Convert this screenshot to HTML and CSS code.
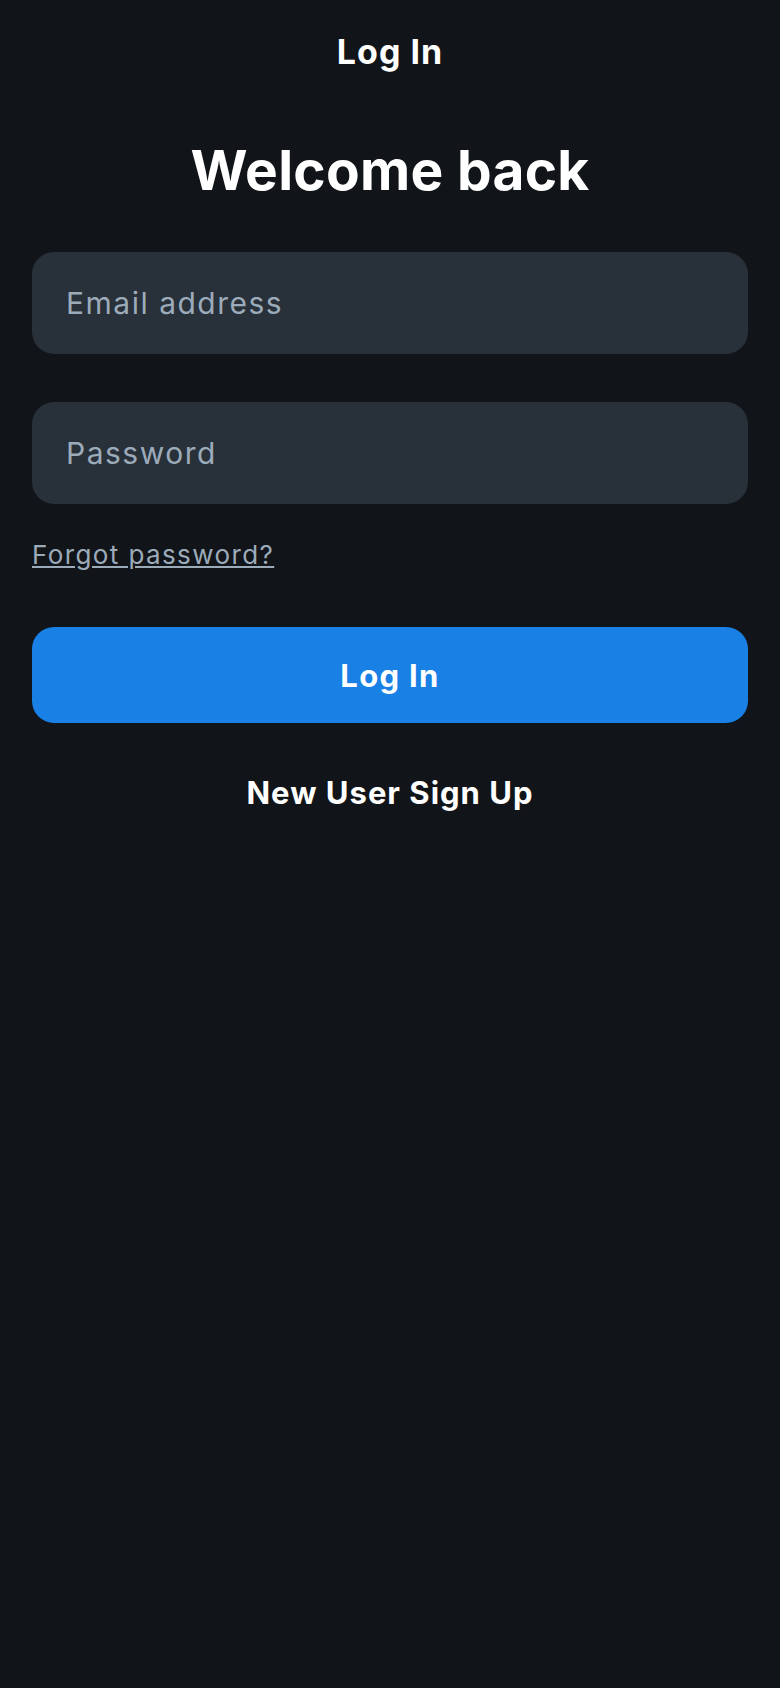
FILE: index.html
```html
<!DOCTYPE html>
<html lang="en">
<head>
<meta charset="utf-8">
<title>Log In</title>
<link rel="stylesheet" href="styles.css">
</head>
<body>
<div class="screen">
  <header class="topbar"><span class="topbar-title">Log In</span></header>
  <h1 class="welcome">Welcome back</h1>
  <form class="form">
    <input class="field" type="email" placeholder="Email address">
    <input class="field" type="password" placeholder="Password">
    <a class="forgot" href="#">Forgot password?</a>
    <button class="primary" type="button">Log In</button>
    <a class="signup" href="#">New User Sign Up</a>
  </form>
</div>
</body>
</html>
```

FILE: styles.css
```css
* { box-sizing: border-box; }
html, body {
  margin: 0;
  padding: 0;
  background: #111418;
}
body {
  font-family: Inter, "Noto Sans", "Liberation Sans", sans-serif;
  color: #ffffff;
}
.screen {
  min-height: 1688px;
  display: flex;
  flex-direction: column;
  padding: 0 32px;
}
.topbar {
  height: 104px;
  display: flex;
  align-items: center;
  justify-content: center;
}
.topbar-title {
  font-size: 34px;
  font-weight: 700;
  line-height: 40px;
  letter-spacing: 1px;
}
.welcome {
  margin: 34px 0 0;
  font-size: 55px;
  font-weight: 700;
  line-height: 64px;
  text-align: center;
  letter-spacing: 0.3px;
}
.form {
  display: flex;
  flex-direction: column;
  margin-top: 50px;
}
.field {
  height: 102px;
  border: none;
  outline: none;
  border-radius: 22px;
  background: #283039;
  color: #ffffff;
  font-family: inherit;
  font-size: 30px;
  letter-spacing: 1.5px;
  padding: 0 34px;
  margin-bottom: 48px;
}
.field::placeholder { color: #9cabba; }
.forgot {
  margin-top: -13px;
  font-size: 26px;
  line-height: 32px;
  letter-spacing: 1.4px;
  color: #9cabba;
  text-decoration: underline;
  align-self: flex-start;
}
.primary {
  margin-top: 56px;
  height: 96px;
  border: none;
  border-radius: 22px;
  background: #1980e6;
  color: #ffffff;
  font-family: inherit;
  font-size: 31px;
  font-weight: 700;
  letter-spacing: 1.3px;
}
.signup {
  margin-top: 50px;
  text-align: center;
  font-size: 31px;
  font-weight: 700;
  line-height: 40px;
  letter-spacing: 1px;
  color: #ffffff;
  text-decoration: none;
}
```
